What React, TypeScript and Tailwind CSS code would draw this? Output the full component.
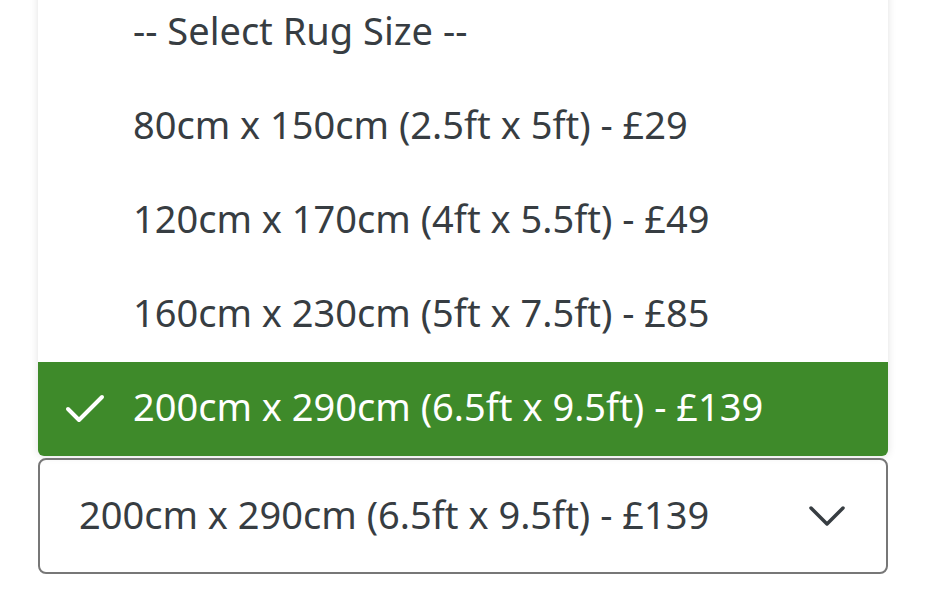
const options = [
  "-- Select Rug Size --",
  "80cm x 150cm (2.5ft x 5ft) - £29",
  "120cm x 170cm (4ft x 5.5ft) - £49",
  "160cm x 230cm (5ft x 7.5ft) - £85",
  "200cm x 290cm (6.5ft x 9.5ft) - £139",
]

const selected = 4

export default function App() {
  return (
    <div
      className="w-[926px] h-[600px] overflow-hidden bg-white"
      style={{ fontFamily: '"Noto Sans", "Open Sans", sans-serif' }}
    >
      <div className="mx-[38px] w-[850px] -mt-[14px]">
        <ul className="bg-white rounded-b-[6px] shadow-[0_0_8px_rgba(0,0,0,0.12)] overflow-hidden">
          {options.map((opt, i) => {
            const isSel = i === selected
            return (
              <li
                key={opt}
                className={`h-[94px] flex items-center text-[38px] ${
                  isSel ? "bg-[#3e8a2a] text-white" : "text-[#373d42]"
                }`}
              >
                <span className="w-[95px] pl-[27px] flex items-center">
                  {isSel && (
                    <svg width="40" height="30" viewBox="0 0 40 30" fill="none">
                      <polyline
                        points="3,15 14,26 37,3"
                        stroke="white"
                        strokeWidth="4"
                        strokeLinecap="round"
                        strokeLinejoin="round"
                      />
                    </svg>
                  )}
                </span>
                <span className="pb-[5px]">{opt}</span>
              </li>
            )
          })}
        </ul>
        <div className="mt-[2px] h-[116px] border-2 border-[#777] rounded-[8px] flex items-center justify-between pl-[39px] pr-[40px] text-[38px] text-[#373d42]">
          <span className="pb-[4px]">{options[selected]}</span>
          <svg width="38" height="22" viewBox="0 0 38 22" fill="none">
            <polyline
              points="3,3 19,19 35,3"
              stroke="#373d42"
              strokeWidth="3.5"
              strokeLinecap="round"
              strokeLinejoin="round"
            />
          </svg>
        </div>
      </div>
    </div>
  )
}
